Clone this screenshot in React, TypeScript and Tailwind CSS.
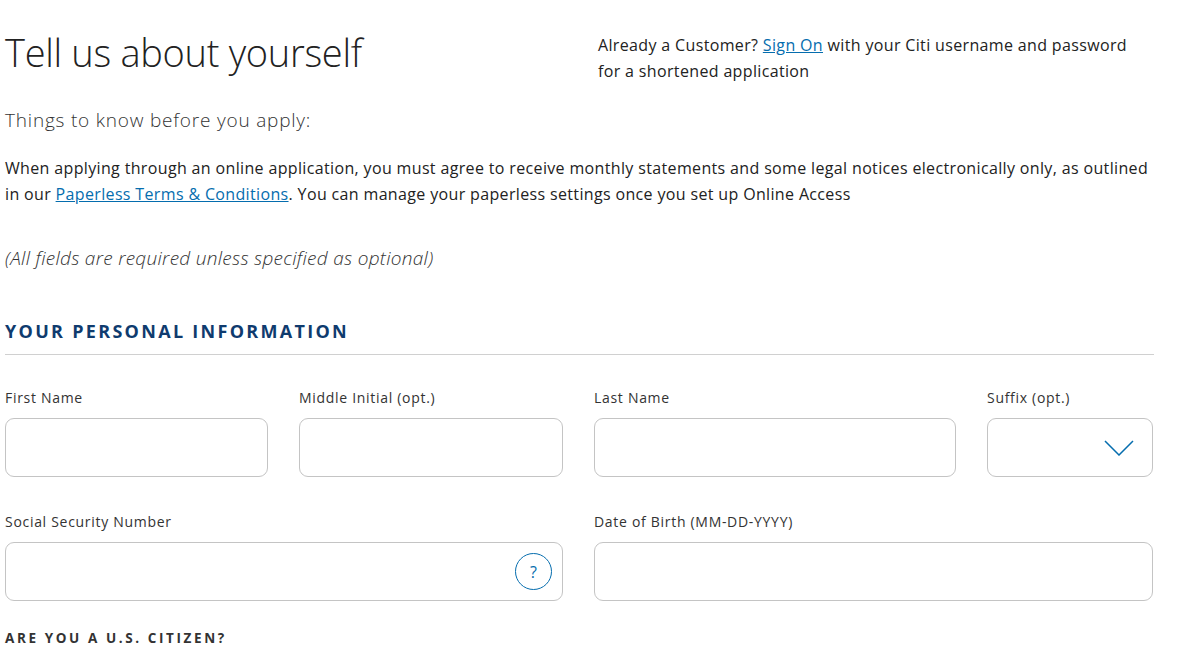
import React from "react";

const F = { fontFamily: '"Open Sans", "Liberation Sans", sans-serif' };

function Field({ label, children, className = "" }: { label: string; children?: React.ReactNode; className?: string }) {
  return (
    <div className={className}>
      <div className="text-[14px] leading-[20px] text-[#333] h-[20px] tracking-[0.7px]">{label}</div>
      <div className="mt-[10px] h-[59px] rounded-[9px] border border-[#c4c4c4] relative flex items-center justify-end pr-[10px]">
        {children}
      </div>
    </div>
  );
}

export default function App() {
  return (
    <div style={F} className="bg-white w-[1177px] h-[671px] overflow-hidden text-[#222] pl-[5px]">
      <div className="w-[1149px]">
        <div className="flex justify-between pt-[27px]">
          <h1 className="text-[38px] leading-[50px] font-light text-[#222] tracking-[-0.3px]">Tell us about yourself</h1>
          <p className="w-[556px] text-[16px] leading-[26px] pt-[5px] text-[#222] font-medium tracking-[0.35px]">
            Already a Customer? <a className="text-[#056dae] underline">Sign On</a> with your Citi username and password for a shortened application
          </p>
        </div>
        <p className="mt-[23px] text-[19px] leading-[26px] font-light text-[#333] tracking-[0.8px]">Things to know before you apply:</p>
        <p className="mt-[22px] text-[16px] leading-[26px] text-[#222] font-medium tracking-[0.35px]">
          When applying through an online application, you must agree to receive monthly statements and some legal notices electronically only, as outlined in our <a className="text-[#056dae] underline">Paperless Terms &amp; Conditions</a>. You can manage your paperless settings once you set up Online Access
        </p>
        <p className="mt-[38px] text-[19px] leading-[26px] italic font-light text-[#333] tracking-[0.3px]">(All fields are required unless specified as optional)</p>
        <h2 className="mt-[48px] text-[18px] leading-[24px] font-bold tracking-[2.3px] text-[#0f3b6e]">YOUR PERSONAL INFORMATION</h2>
        <div className="mt-[11px] border-t border-[#d0d0d0]" />
        <div className="mt-[33px] grid grid-cols-[263px_264px_362px_166px] gap-x-[31px] gap-y-[35px]">
          <Field label="First Name" />
          <Field label="Middle Initial (opt.)" />
          <Field label="Last Name" />
          <Field label="Suffix (opt.)">
            <svg width="30" height="16" viewBox="0 0 30 16" className="mr-[8px]"><path d="M1 1 L15 15 L29 1" fill="none" stroke="#056dae" strokeWidth="1.5" /></svg>
          </Field>
          <Field label="Social Security Number" className="col-span-2">
            <div className="w-[37px] h-[37px] rounded-full border border-[#056dae] text-[#056dae] flex items-center justify-center text-[16px]">?</div>
          </Field>
          <Field label="Date of Birth (MM-DD-YYYY)" className="col-span-2" />
        </div>
        <div className="mt-[27px] text-[13.5px] font-bold tracking-[2.6px] text-[#333]">ARE YOU A U.S. CITIZEN?</div>
      </div>
    </div>
  );
}
